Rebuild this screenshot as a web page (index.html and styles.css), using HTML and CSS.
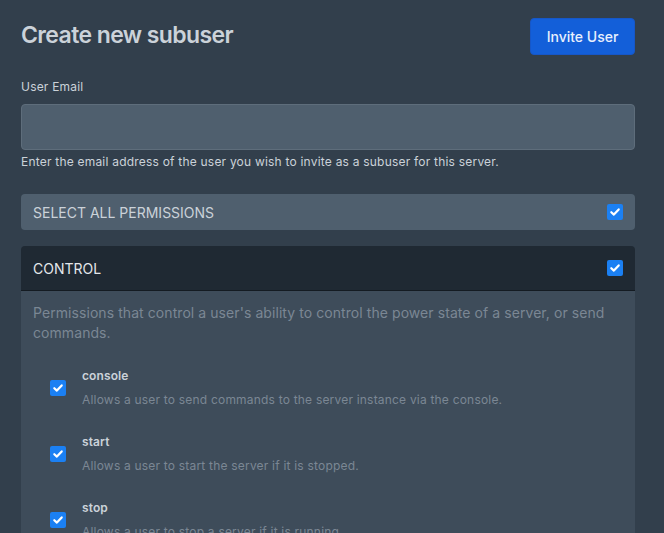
FILE: index.html
```html
<!DOCTYPE html>
<html lang="en">
<head>
<meta charset="utf-8">
<title>Create new subuser</title>
<link rel="stylesheet" href="styles.css">
</head>
<body>
<div class="page">
  <div class="top">
    <h2 class="title">Create new subuser</h2>
    <button class="btn-primary" type="button">Invite User</button>
  </div>

  <div class="field">
    <label class="label" for="email">User Email</label>
    <input class="input" id="email" type="text">
    <p class="help">Enter the email address of the user you wish to invite as a subuser for this server.</p>
  </div>

  <div class="select-all">
    <span class="select-all-text">Select all permissions</span>
    <span class="check"><svg viewBox="0 0 16 16"><path d="M4.3 8.2 L6.9 10.6 L11.7 5.4" fill="none" stroke="#fff" stroke-width="2.2" stroke-linecap="round" stroke-linejoin="round"/></svg></span>
  </div>

  <div class="card">
    <div class="card-head">
      <span class="card-title">Control</span>
      <span class="check"><svg viewBox="0 0 16 16"><path d="M4.3 8.2 L6.9 10.6 L11.7 5.4" fill="none" stroke="#fff" stroke-width="2.2" stroke-linecap="round" stroke-linejoin="round"/></svg></span>
    </div>
    <div class="card-body">
      <p class="card-desc">Permissions that control a user's ability to control the power state of a server, or send commands.</p>
      <div class="perm">
        <span class="check"><svg viewBox="0 0 16 16"><path d="M4.3 8.2 L6.9 10.6 L11.7 5.4" fill="none" stroke="#fff" stroke-width="2.2" stroke-linecap="round" stroke-linejoin="round"/></svg></span>
        <div class="perm-text">
          <div class="perm-name">console</div>
          <div class="perm-desc">Allows a user to send commands to the server instance via the console.</div>
        </div>
      </div>
      <div class="perm">
        <span class="check"><svg viewBox="0 0 16 16"><path d="M4.3 8.2 L6.9 10.6 L11.7 5.4" fill="none" stroke="#fff" stroke-width="2.2" stroke-linecap="round" stroke-linejoin="round"/></svg></span>
        <div class="perm-text">
          <div class="perm-name">start</div>
          <div class="perm-desc">Allows a user to start the server if it is stopped.</div>
        </div>
      </div>
      <div class="perm">
        <span class="check"><svg viewBox="0 0 16 16"><path d="M4.3 8.2 L6.9 10.6 L11.7 5.4" fill="none" stroke="#fff" stroke-width="2.2" stroke-linecap="round" stroke-linejoin="round"/></svg></span>
        <div class="perm-text">
          <div class="perm-name">stop</div>
          <div class="perm-desc">Allows a user to stop a server if it is running.</div>
        </div>
      </div>
    </div>
  </div>
</div>
</body>
</html>
```

FILE: styles.css
```css
* { box-sizing: border-box; }

html, body {
  margin: 0;
  padding: 0;
  height: 100%;
  overflow: hidden;
}

body {
  background: #323f4c;
  font-family: Inter, "Noto Sans", "Liberation Sans", sans-serif;
  color: #cbd2d9;
}

.page {
  width: 664px;
  padding: 18px 29px 0 21px;
}

.top {
  display: flex;
  justify-content: space-between;
  align-items: flex-start;
}

.title {
  margin: 2px 0 0;
  font-size: 23px;
  line-height: 30px;
  font-weight: 600;
  color: #cbd2d9;
  letter-spacing: -0.6px;
}

.btn-primary {
  width: 105px;
  height: 37px;
  border: 1px solid #1657c8;
  border-radius: 4px;
  background: #135fd9;
  color: #e8f0fd;
  font-family: inherit;
  font-size: 14px;
  font-weight: 500;
  padding: 0;
}

.field {
  margin-top: 24px;
}

.label {
  display: block;
  font-size: 12px;
  line-height: 16px;
  color: #cbd2d9;
  letter-spacing: 0.2px;
  margin-bottom: 9px;
}

.input {
  display: block;
  width: 100%;
  height: 46px;
  background: #4f5f6e;
  border: 1px solid #5e6d7b;
  border-radius: 4px;
  outline: none;
}

.help {
  margin: 4px 0 0;
  font-size: 12px;
  line-height: 16px;
  color: #cbd2d9;
  letter-spacing: 0.21px;
}

.select-all {
  margin-top: 24px;
  height: 36px;
  background: #4f5f6e;
  border-radius: 4px;
  display: flex;
  align-items: center;
  justify-content: space-between;
  padding: 0 12px;
}

.select-all-text {
  text-transform: uppercase;
  font-size: 14px;
  color: #cbd2d9;
}

.check {
  width: 16px;
  height: 16px;
  flex: 0 0 16px;
  border-radius: 2px;
  background: #1b80f3;
  display: inline-flex;
}

.check svg {
  width: 16px;
  height: 16px;
}

.card {
  margin-top: 16px;
  border-radius: 4px;
  overflow: hidden;
}

.card-head {
  height: 45px;
  background: #1f2933;
  border-bottom: 1px solid #141b22;
  display: flex;
  align-items: center;
  justify-content: space-between;
  padding: 0 12px;
}

.card-title {
  text-transform: uppercase;
  font-size: 14px;
  color: #e4e7eb;
}

.card-body {
  background: #3e4c5a;
  padding: 12px 12px 20px;
}

.card-desc {
  margin: 0;
  font-size: 14px;
  line-height: 20px;
  color: #7b8794;
  letter-spacing: 0.07px;
}

.perm {
  display: flex;
  align-items: center;
  padding: 11px 0 11px 17px;
}

.perm:first-of-type {
  margin-top: 12px;
}

.perm .check {
  margin-right: 16px;
}

.perm-name {
  font-size: 12px;
  line-height: 20px;
  font-weight: 600;
  color: #cbd2d9;
  letter-spacing: 0.1px;
}

.perm-desc {
  margin-top: 4px;
  font-size: 12px;
  line-height: 20px;
  color: #7b8794;
  letter-spacing: 0.2px;
}
```
